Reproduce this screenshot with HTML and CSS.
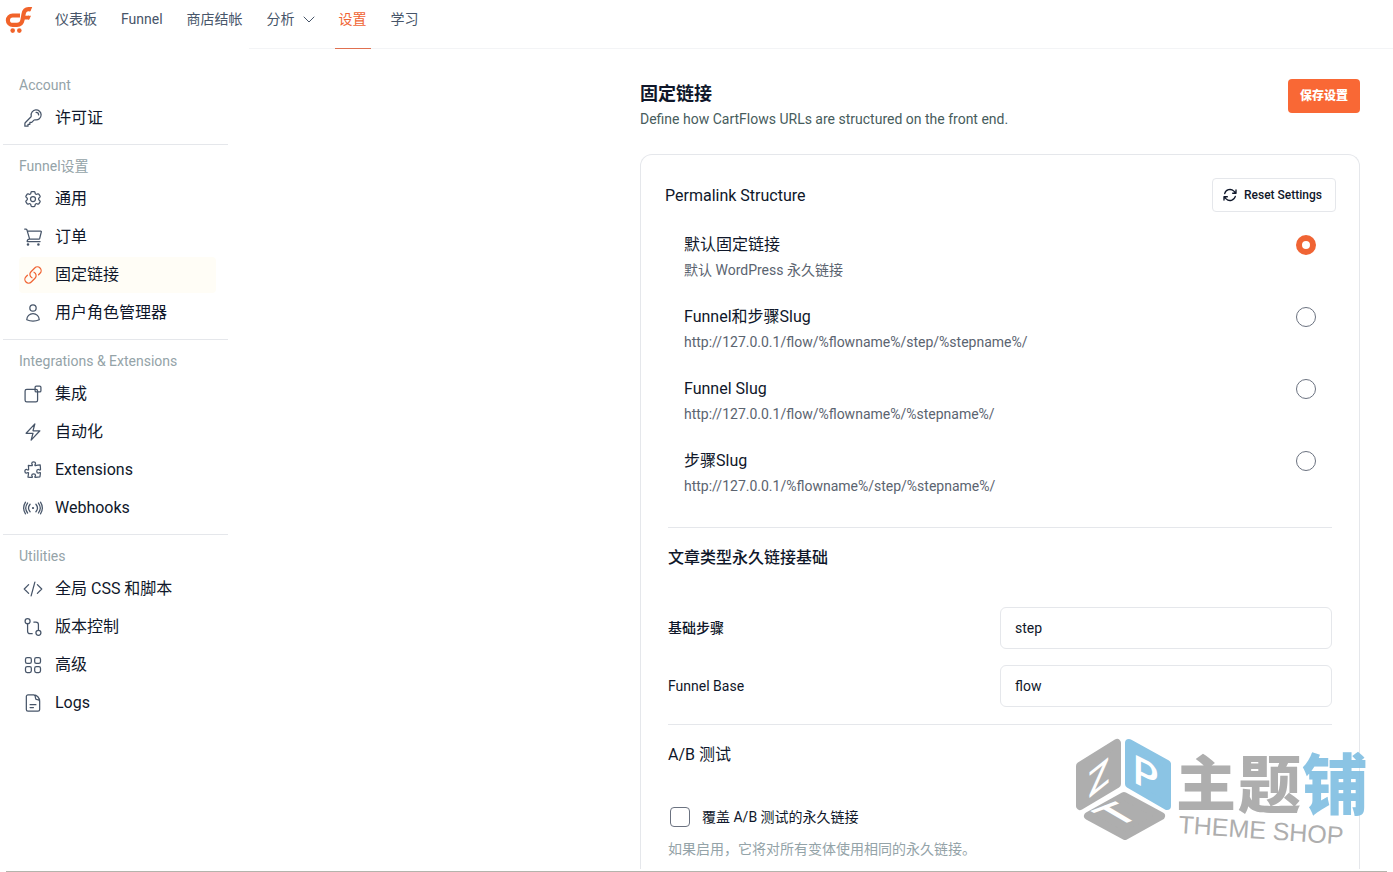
FILE: index.html
```html
<!DOCTYPE html>
<html lang="zh-CN">
<head>
<meta charset="utf-8">
<meta name="viewport" content="width=device-width, initial-scale=1">
<title>固定链接</title>
<link rel="stylesheet" href="styles.css">
</head>
<body>
<div class="shell">
  <header class="topbar">
    <a class="logo" href="#" aria-label="CartFlows">
      <svg width="28" height="28" viewBox="0 0 28 28" fill="none" stroke="#f1632a" stroke-width="4.200">
        <path d="M15 9.500H7.600a4.600 4.600 0 0 0 0 9.400H12c3.600 0 4.900-1.600 5.500-5l1-5.600c.5-3.200 1.800-5.200 5-5.200h1.500"/>
        <path d="M17 11.600h7" stroke-width="3.800"/>
        <path d="M24 1h3.200l-1.700 4.200H24zM23 9.700h3l-1.700 3.800H23z" fill="#f1632a" stroke="none"/>
        <circle cx="7.700" cy="24.600" r="2.300" fill="#f1632a" stroke="none"/>
        <circle cx="14.300" cy="24.600" r="2.300" fill="#f1632a" stroke="none"/>
      </svg>
    </a>
    <nav class="topnav">
      <a href="#">仪表板</a>
      <a href="#">Funnel</a>
      <a href="#">商店结帐</a>
      <a href="#">分析
        <svg width="12" height="12" viewBox="0 0 12 12" fill="none" stroke="currentColor" stroke-linecap="round" stroke-linejoin="round"><path d="M1 4l5 5 5-5"/></svg>
      </a>
      <a href="#" class="current">设置</a>
      <a href="#">学习</a>
    </nav>
  </header>
  <div class="body">
    <aside class="sidebar">
      <section class="group">
        <h2>Account</h2>
        <a href="#"><svg class="icon" viewBox="0 0 24 24"><path d="M15.750 5.250a3 3 0 0 1 3 3m3 0a6 6 0 0 1-7.029 5.912c-.563-.097-1.159.026-1.563.430L10.500 17.250H8.250v2.250H6v2.250H2.250v-2.818c0-.597.237-1.170.659-1.591l6.499-6.499c.404-.404.527-1 .430-1.563A6 6 0 1 1 21.750 8.250Z"/></svg>许可证</a>
      </section>
      <section class="group">
        <h2>Funnel设置</h2>
        <a href="#"><svg class="icon" viewBox="0 0 24 24"><path d="M9.594 3.940c.090-.542.560-.940 1.110-.940h2.593c.550 0 1.020.398 1.110.940l.213 1.281c.063.374.313.686.645.870.074.040.147.083.220.127.325.196.720.257 1.075.124l1.217-.456a1.125 1.125 0 0 1 1.370.490l1.296 2.247a1.125 1.125 0 0 1-.260 1.431l-1.003.827c-.293.241-.438.613-.430.992a7.723 7.723 0 0 1 0 .255c-.008.378.137.750.430.991l1.004.827c.424.350.534.955.260 1.430l-1.298 2.247a1.125 1.125 0 0 1-1.369.491l-1.217-.456c-.355-.133-.750-.072-1.076.124a6.470 6.470 0 0 1-.220.128c-.331.183-.581.495-.644.869l-.213 1.281c-.090.543-.560.940-1.110.940h-2.594c-.550 0-1.019-.398-1.110-.940l-.213-1.281c-.062-.374-.312-.686-.644-.870a6.520 6.520 0 0 1-.220-.127c-.325-.196-.720-.257-1.076-.124l-1.217.456a1.125 1.125 0 0 1-1.369-.490l-1.297-2.247a1.125 1.125 0 0 1 .260-1.431l1.004-.827c.292-.240.437-.613.430-.991a6.932 6.932 0 0 1 0-.255c.007-.380-.138-.751-.430-.992l-1.004-.827a1.125 1.125 0 0 1-.260-1.430l1.297-2.247a1.125 1.125 0 0 1 1.370-.491l1.216.456c.356.133.751.072 1.076-.124.072-.044.146-.086.220-.128.332-.183.582-.495.644-.869l.214-1.280Z"/><circle cx="12" cy="12" r="3"/></svg>通用</a>
        <a href="#"><svg class="icon" viewBox="0 0 24 24"><path d="M2 2.500h1.500c.6 0 1 .4 1.200.9l3.100 10.600M7.500 14.500h11.600a1 1 0 0 0 .9-.7l2-8a.8.800 0 0 0-.7-1L5.200 5M7.500 14.500a3 3 0 0 0-2.500 3h15.500"/><circle cx="6" cy="21" r=".8"/><circle cx="18.500" cy="21" r=".8"/></svg>订单</a>
        <a href="#" class="active"><svg class="icon" viewBox="0 0 24 24"><path d="M13.190 8.688a4.500 4.500 0 0 1 1.242 7.244l-4.500 4.500a4.500 4.500 0 0 1-6.364-6.364l1.757-1.757m13.350-.622 1.757-1.757a4.500 4.500 0 0 0-6.364-6.364l-4.500 4.500a4.500 4.500 0 0 0 1.242 7.244"/></svg>固定链接</a>
        <a href="#"><svg class="icon" viewBox="0 0 24 24"><circle cx="12" cy="6" r="3.800"/><path d="M4.500 20.100a7.500 7.500 0 0 1 15 0A17.900 17.900 0 0 1 12 21.800c-2.700 0-5.200-.6-7.500-1.700Z"/></svg>用户角色管理器</a>
      </section>
      <section class="group">
        <h2>Integrations &amp; Extensions</h2>
        <a href="#"><svg class="icon" viewBox="0 0 24 24"><rect x="2.500" y="6.500" width="15" height="15" rx="2"/><rect x="14.500" y="2.500" width="7" height="7" rx="1.500"/></svg>集成</a>
        <a href="#"><svg class="icon" viewBox="0 0 24 24"><path d="m3.750 13.500 10.500-11.250L12 10.500h8.250L9.750 21.750 12 13.500H3.750Z"/></svg>自动化</a>
        <a href="#"><svg class="icon" viewBox="0 0 24 24"><path d="M14.250 6.087c0-.355.186-.676.401-.959.221-.290.349-.634.349-1.003 0-1.036-1.007-1.875-2.250-1.875s-2.250.840-2.250 1.875c0 .369.128.713.349 1.003.215.283.401.604.401.959a.64.640 0 0 1-.657.643 48.390 48.390 0 0 1-4.163-.300c.186 1.613.293 3.250.315 4.907a.656.656 0 0 1-.658.663c-.355 0-.676-.186-.959-.401a1.647 1.647 0 0 0-1.003-.349c-1.036 0-1.875 1.007-1.875 2.250s.840 2.250 1.875 2.250c.369 0 .713-.128 1.003-.349.283-.215.604-.401.959-.401.310 0 .555.260.532.570a48.039 48.039 0 0 1-.642 5.056c1.518.190 3.058.309 4.616.354a.64.640 0 0 0 .657-.643c0-.355-.186-.676-.401-.959a1.647 1.647 0 0 1-.349-1.003c0-1.035 1.008-1.875 2.250-1.875 1.243 0 2.250.840 2.250 1.875 0 .369-.128.713-.349 1.003-.215.283-.400.604-.400.959 0 .333.277.599.610.580a48.100 48.100 0 0 0 5.427-.630 48.050 48.050 0 0 0 .582-4.717.532.532 0 0 0-.533-.570c-.355 0-.676.186-.959.401-.290.221-.634.349-1.003.349-1.035 0-1.875-1.007-1.875-2.250s.840-2.250 1.875-2.250c.370 0 .713.128 1.003.349.283.215.604.401.960.401a.656.656 0 0 0 .658-.663 48.422 48.422 0 0 0-.370-5.360c-1.886.342-3.810.574-5.766.689a.578.578 0 0 1-.610-.580Z"/></svg>Extensions</a>
        <a href="#"><svg class="icon" viewBox="0 0 24 24"><path d="M8.500 16.500a7 7 0 0 1 0-9M15.500 7.500a7 7 0 0 1 0 9M5.500 18a10 10 0 0 1 0-12M18.500 6a10 10 0 0 1 0 12M3 19a13 13 0 0 1 0-14M21 5a13 13 0 0 1 0 14"/><circle cx="12" cy="12" r=".6"/></svg>Webhooks</a>
      </section>
      <section class="group">
        <h2>Utilities</h2>
        <a href="#"><svg class="icon" viewBox="0 0 24 24"><path d="M17.250 6.750 22.500 12l-5.250 5.250M6.750 17.250 1.500 12l5.250-5.250M14.250 3.750l-4.500 16.500"/></svg>全局 CSS 和脚本</a>
        <a href="#"><svg class="icon" viewBox="0 0 24 24"><circle cx="5.500" cy="5" r="3"/><circle cx="18.500" cy="19" r="3"/><path d="M5.500 8v9a3 3 0 0 0 3 3h2.500M18.500 16V9a3 3 0 0 0-3-3H13"/></svg>版本控制</a>
        <a href="#"><svg class="icon" viewBox="0 0 24 24"><rect x="3" y="3" width="7" height="7" rx="2"/><rect x="14" y="3" width="7" height="7" rx="2"/><rect x="3" y="14" width="7" height="7" rx="2"/><rect x="14" y="14" width="7" height="7" rx="2"/></svg>高级</a>
        <a href="#"><svg class="icon" viewBox="0 0 24 24"><path d="M13 2.200H6A2 2 0 0 0 4 4.200v15.600a2 2 0 0 0 2 2h12a2 2 0 0 0 2-2V10c0-4.300-3.500-7.800-7-7.800ZM13 2.200c2 .6 2 2 2 3.800 0 1.500.6 2 2 2 1.700 0 2.600.5 3 2M8.500 14h7M8.500 17.500h4"/></svg>Logs</a>
      </section>
    </aside>
    <main class="main">
      <div class="page-head">
        <div>
          <h1>固定链接</h1>
          <p>Define how CartFlows URLs are structured on the front end.</p>
        </div>
        <button class="save" type="button">保存设置</button>
      </div>
      <form class="card">
        <div class="card-head">
          <h2>Permalink Structure</h2>
          <button class="reset" type="button">
            <svg width="16" height="16" viewBox="0 0 24 24" fill="none" stroke="currentColor" stroke-width="2" stroke-linecap="round" stroke-linejoin="round"><path d="M16.023 9.348h4.992V4.356M2.985 19.644v-4.992h4.992M2.985 14.652l3.181 3.183a8.250 8.250 0 0 0 13.803-3.700M4.031 9.865a8.250 8.250 0 0 1 13.803-3.700l3.181 3.182"/></svg>
            Reset Settings
          </button>
        </div>
        <div class="options">
          <label class="option"><span><strong>默认固定链接</strong><small>默认 WordPress 永久链接</small></span><input type="radio" name="permalink" checked></label>
          <label class="option"><span><strong>Funnel和步骤Slug</strong><small>http://127.0.0.1/flow/%flowname%/step/%stepname%/</small></span><input type="radio" name="permalink"></label>
          <label class="option"><span><strong>Funnel Slug</strong><small>http://127.0.0.1/flow/%flowname%/%stepname%/</small></span><input type="radio" name="permalink"></label>
          <label class="option"><span><strong>步骤Slug</strong><small>http://127.0.0.1/%flowname%/step/%stepname%/</small></span><input type="radio" name="permalink"></label>
        </div>
        <section class="block">
          <h3>文章类型永久链接基础</h3>
          <div class="fields">
            <label for="step-base">基础步骤</label>
            <input id="step-base" type="text" value="step">
            <label for="funnel-base" class="latin">Funnel Base</label>
            <input id="funnel-base" type="text" value="flow">
          </div>
        </section>
        <section class="block">
          <h3 class="latin">A/B 测试</h3>
          <label class="check"><input type="checkbox">覆盖 A/B 测试的永久链接</label>
          <p class="help">如果启用，它将对所有变体使用相同的永久链接。</p>
        </section>
      </form>
    </main>
  </div>
  <svg class="brandmark" width="320" height="160" viewBox="0 -24 320 160" aria-label="主题铺 THEME SHOP">
    <g stroke-linejoin="round" stroke-width="8">
      <path d="M10 33 47 10V51L10 73Z" fill="#aaa" stroke="#aaa"/>
      <path d="M59 10 97 31V73L59 51Z" fill="#85c1e3" stroke="#85c1e3"/>
      <path d="M18 83 54 63 91 83 55 103Z" fill="#aaa" stroke="#aaa"/>
    </g>
    <g fill="#fff" class="mark-letters">
      <text font-size="36" transform="matrix(1 -.8 0 1 18 66)">Z</text>
      <text font-size="40" transform="matrix(1 .5 0 1 63 49)">P</text>
      <text font-size="34" transform="matrix(1.300 -.5 1.100 .65 46 94)">T</text>
    </g>
    <g class="mark-name">
      <text x="106" y="73" font-size="60" fill="#aaa">主</text>
      <text x="168" y="74" font-size="63" fill="#aaa">题</text>
      <text x="232" y="76" font-size="66" fill="#85c1e3">铺</text>
    </g>
    <text class="mark-sub" x="108" y="100" transform="rotate(4 108 100)" fill="#aaa">THEME SHOP</text>
  </svg>
  <div class="baseline"></div>
</div>
</body>
</html>
```
FILE: styles.css
```css
* { box-sizing: border-box; }
body {
  margin: 0;
  background: #fff;
  color: #0f172a;
  font-family: Roboto, "Noto Sans CJK SC", sans-serif;
  font-size: 14px;
  line-height: 20px;
}
h1, h2, h3, p { margin: 0; font-weight: 400; }
a { color: inherit; text-decoration: none; }
button, input { font: inherit; color: inherit; }
.shell { position: relative; display: flex; flex-direction: column; min-height: 100vh; }
.topbar { display: flex; height: 49px; }
.logo { width: 51px; padding: 6px 0 0 5px; flex: none; }
.topnav {
  display: flex;
  gap: 16px;
  flex: 1;
  color: #475569;
  background: linear-gradient(#f3f4f6, #f3f4f6) 198px 100% / 100% 1px no-repeat;
}
.topnav a { display: flex; align-items: center; gap: 8px; padding: 0 4px 10px; border-bottom: 1px solid transparent; }
.topnav .current { color: #f06434; border-color: #e07050; }
.body { display: flex; flex: 1; }
.sidebar { width: 228px; flex: none; padding: 15px 0 0 3px; }
.group { padding: 11px 12px 8px 16px; border-top: 1px solid #e5e7eb; }
.group:first-child { border-top: 0; }
.group h2 { font-size: 14px; line-height: 20px; color: #94a3a8; margin-bottom: 5px; }
.group a { display: flex; align-items: center; gap: 12px; height: 36px; padding-left: 4px; font-size: 16px; border-radius: 4px; }
.group a + a { margin-top: 2px; }
.group .active { background: #fffdf6; }
.icon { width: 20px; height: 20px; fill: none; stroke: #475569; stroke-width: 1.5; stroke-linecap: round; stroke-linejoin: round; }
.active .icon { stroke: #f06434; }
.main { display: flex; flex-direction: column; flex: 1; max-width: 753px; margin-left: auto; padding: 30px 33px 0 0; }
.page-head { display: flex; justify-content: space-between; align-items: flex-start; height: 75px; }
.page-head h1 { font-size: 18px; line-height: 30px; font-weight: 700; }
.page-head p { color: #475c5c; }
.save { height: 34px; padding: 0 12px; border: 0; border-radius: 4px; background: #f96835; color: #fff; font-size: 12px; font-weight: 900; }
.card { flex: 1; border: 1px solid #e5e7eb; border-bottom: 0; border-radius: 12px 12px 0 0; padding: 23px 23px 9px 24px; }
.card-head { display: flex; justify-content: space-between; align-items: center; }
.card-head h2 { font-size: 16px; padding-top: 2px; }
.reset { display: flex; align-items: center; gap: 6px; height: 34px; padding: 0 13px 0 9px; border: 1px solid #e5e7eb; border-radius: 4px; background: #fff; font-size: 12px; font-weight: 500; }
.options { display: grid; gap: 23px; padding: 21px 20px 29px 19px; }
.option { display: flex; justify-content: space-between; align-items: flex-start; }
.option strong, .option small { display: block; line-height: 24px; }
.option strong { font-size: 16px; font-weight: 400; margin-bottom: 1px; }
.option small { font-size: 14px; color: #5b6470; }
.option input { appearance: none; width: 20px; height: 20px; margin: 2px 0 0; border: 1px solid #6b7280; border-radius: 50%; background: #fff; }
.option input:checked { border: 6px solid #f06434; }
.block { margin: 0 4px 0 3px; padding: 18px 0 17px; border-top: 1px solid #e5e7eb; }
.block h3 { font-size: 16px; line-height: 24px; font-weight: 500; }
.fields { display: grid; grid-template-columns: 1fr 1fr; align-items: center; gap: 16px 0; margin-top: 37px; font-weight: 500; }
.fields input { width: 100%; height: 42px; padding: 0 14px; border: 1px solid #e5e7eb; border-radius: 6px; background: #fff; font-weight: 400; }
.fields .latin, .block .latin { font-weight: 400; }
.check { display: flex; align-items: center; gap: 12px; margin-top: 40px; padding-left: 2px; }
.check input { appearance: none; width: 20px; height: 20px; margin: 0; border: 1px solid #6b7280; border-radius: 4px; background: #fff; }
.help { margin-top: 12px; color: #94a3a8; }
.block:last-child { padding-bottom: 0; }
.baseline { height: 1px; margin: 2px 6px 0; background: #b4b4ac; }
.brandmark { position: absolute; right: 3px; bottom: 3px; opacity: .95; overflow: visible; pointer-events: none; }
.mark-letters { font-family: Roboto, sans-serif; font-weight: 500; }
.mark-name { font-family: "Noto Sans CJK SC", sans-serif; font-weight: 900; }
.mark-sub { font: 25px "Liberation Sans", sans-serif; }
```
